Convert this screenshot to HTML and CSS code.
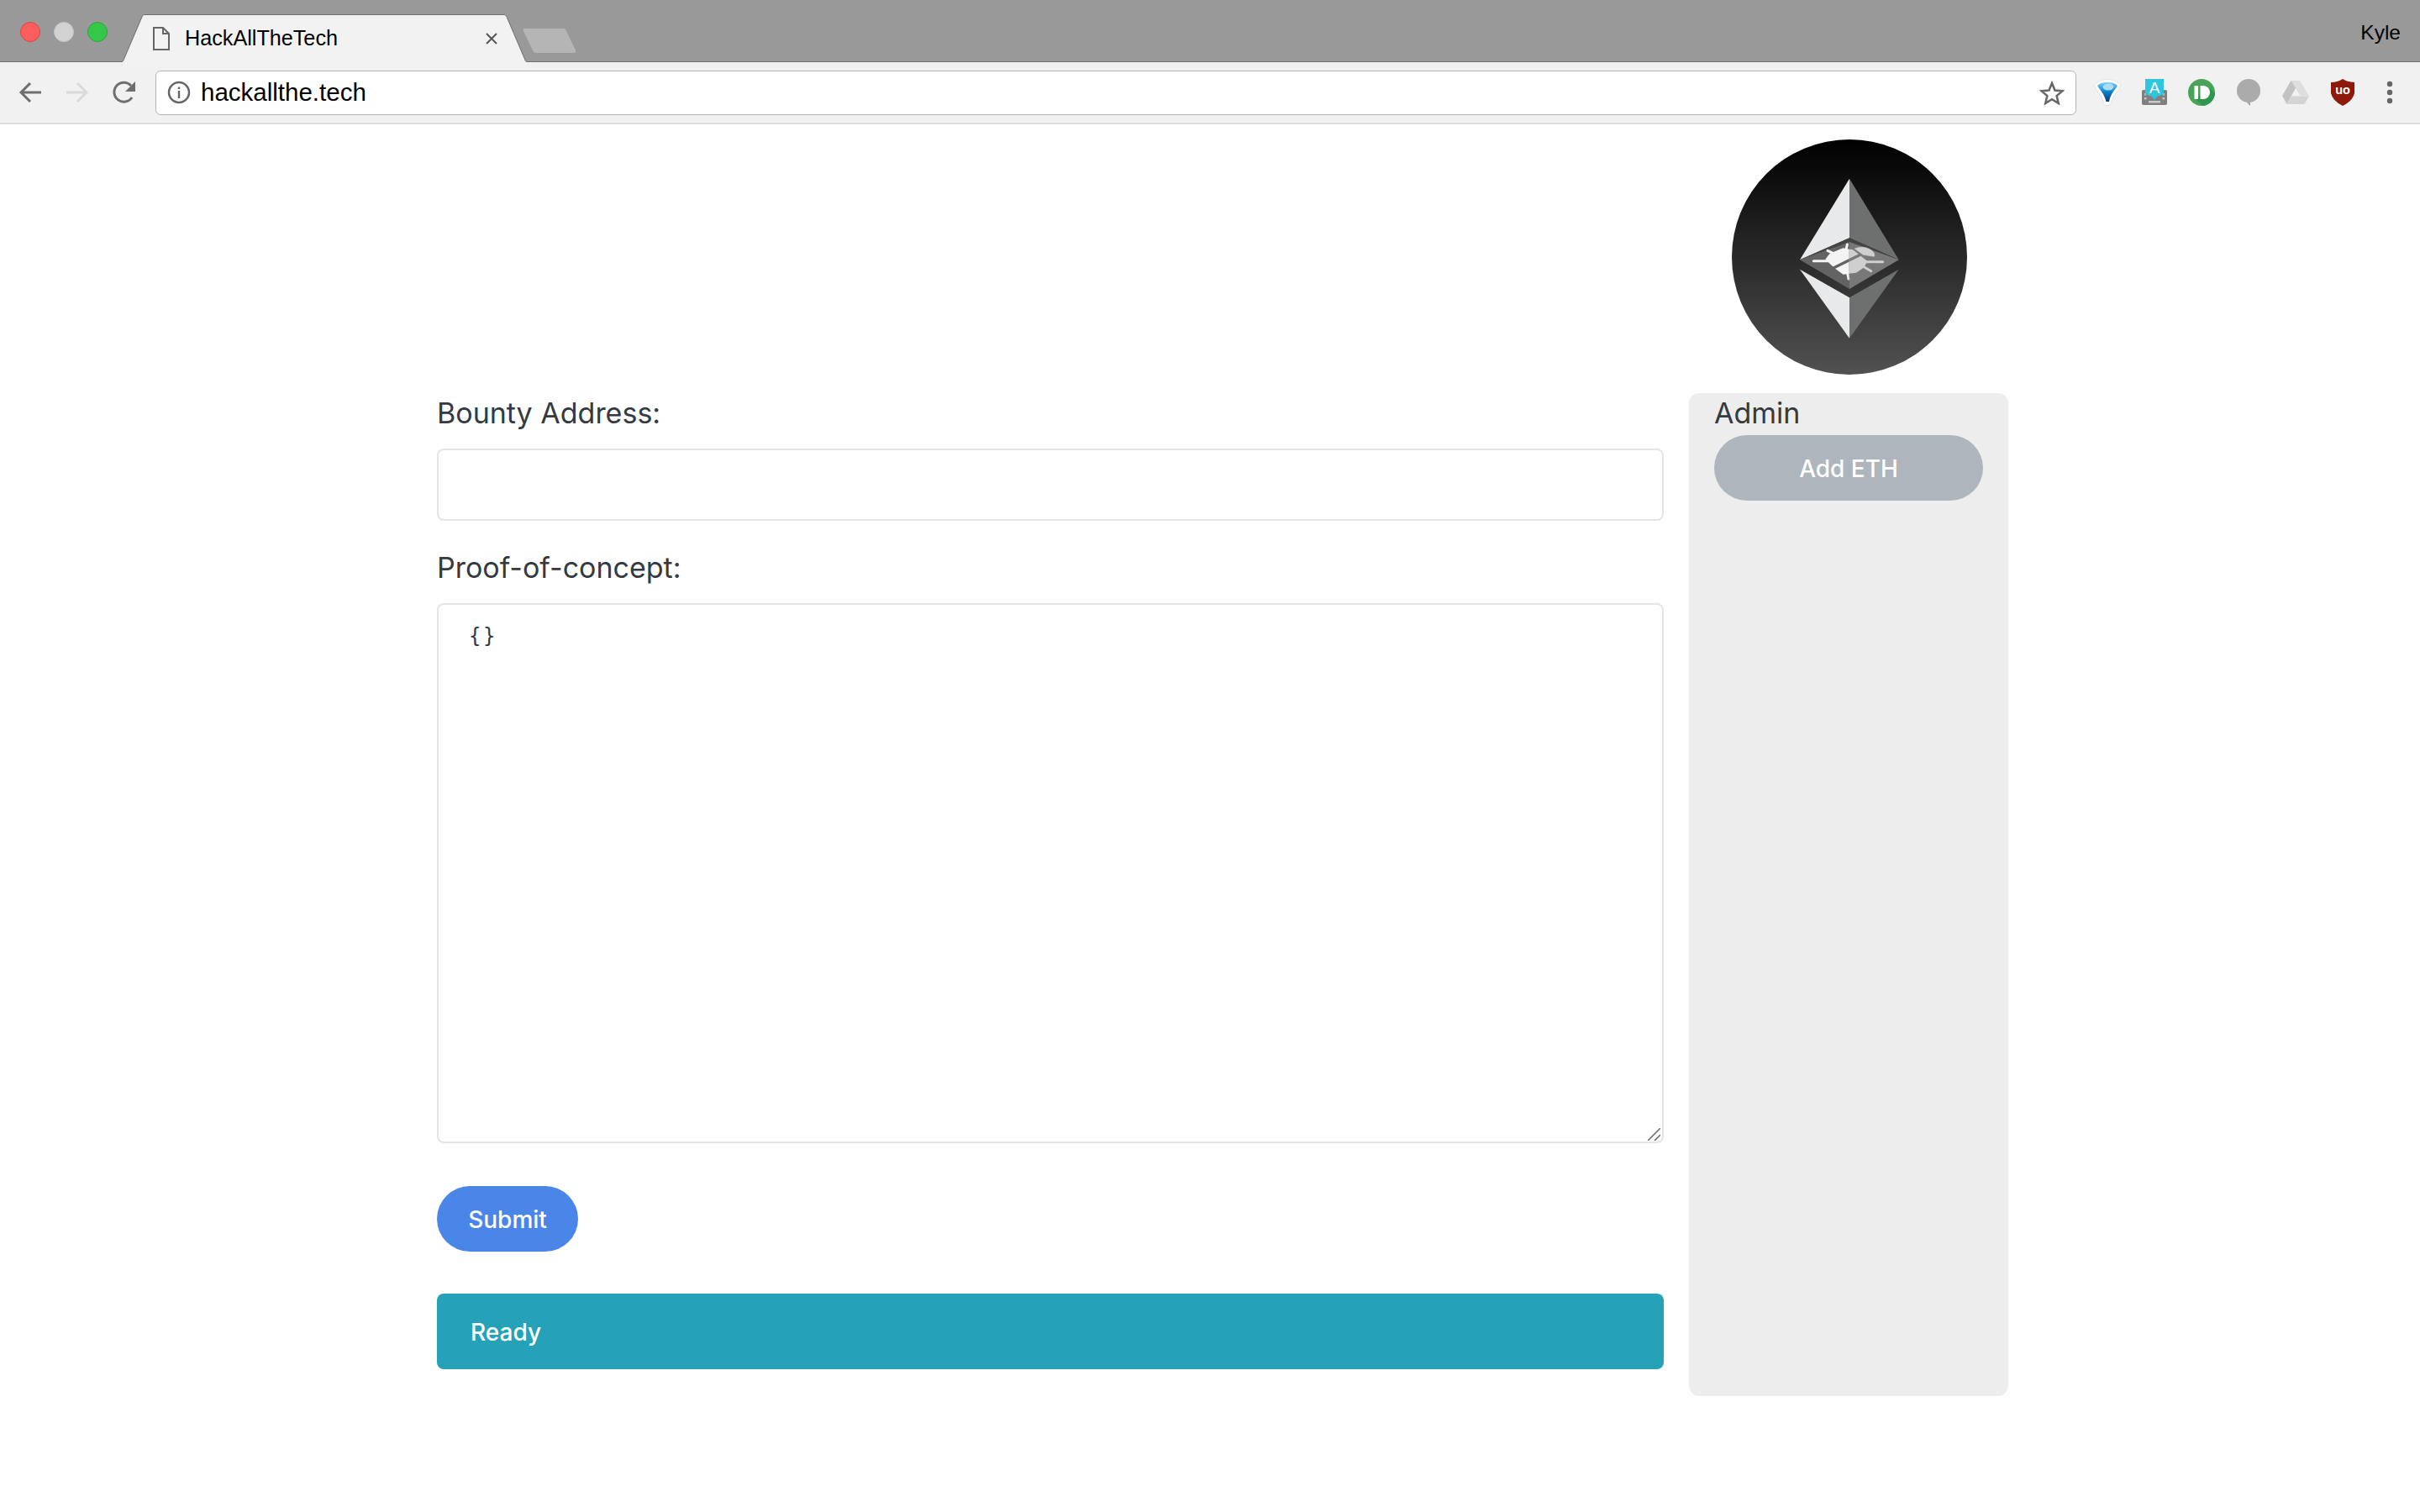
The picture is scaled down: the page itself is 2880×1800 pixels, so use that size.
FILE: index.html
```html
<!DOCTYPE html>
<html lang="en">
<head>
    <meta charset="UTF-8">
    <meta name="viewport" content="width=device-width, initial-scale=1.0">
    <title>HackAllTheTech</title>
    <link rel="stylesheet" href="styles.css">
</head>
<body>
    <!-- Browser chrome -->
    <div class="tab-strip">
        <div class="lights">
            <span class="light light-red"></span>
            <span class="light light-grey"></span>
            <span class="light light-green"></span>
        </div>
        <div class="tab">
            <svg class="tab-shape" width="482" height="57" viewBox="0 0 482 57">
                <path d="M0 56.500 C1 56.500 1.500 56 2 54.500 L24 3 C25 1 25.500 .5 27 .5 L455 .5 C456.500 .5 457 1 458 3 L480 54.500 C480.500 56 481 56.500 482 56.500" fill="#f2f2f2" stroke="#6e6e6e"/>
                <rect x="1" y="56" width="480" height="1" fill="#f2f2f2"/>
            </svg>
            <svg class="tab-icon" width="20" height="28" viewBox="0 0 20 28">
                <path d="M1 1 H12 L19 8 V27 H1 Z M12 1 V8 H19" fill="none" stroke="#666" stroke-width="2"/>
            </svg>
            <span class="tab-title">HackAllTheTech</span>
            <svg class="tab-close" width="16" height="16" viewBox="0 0 16 16">
                <path d="M2 2 L14 14 M14 2 L2 14" stroke="#555" stroke-width="2"/>
            </svg>
        </div>
        <svg class="new-tab" width="64" height="31" viewBox="0 0 64 31">
            <path d="M3 1 H48 Q51 1 52 4 L63 27 Q64 30 61 30 H16 Q13 30 12 27 L1 4 Q0 1 3 1 Z" fill="#b5b5b5"/>
        </svg>
        <span class="profile-name">Kyle</span>
    </div>

    <div class="toolbar">
        <span class="nav-btn">
            <svg width="28" height="26" viewBox="0 0 28 26">
                <path d="M27 13 H3 M14 2 L3 13 L14 24" fill="none" stroke="#6e6e6e" stroke-width="3"/>
            </svg>
        </span>
        <span class="nav-btn">
            <svg width="28" height="26" viewBox="0 0 28 26">
                <path d="M1 13 H25 M14 2 L25 13 L14 24" fill="none" stroke="#d9d9d9" stroke-width="3"/>
            </svg>
        </span>
        <span class="nav-btn">
            <svg width="28" height="28" viewBox="0 0 28 28">
                <path d="M23 20 A11.500 11.500 0 1 1 22 6" fill="none" stroke="#6e6e6e" stroke-width="3"/>
                <path d="M27 1 V13 H15 Z" fill="#6e6e6e"/>
            </svg>
        </span>
        <div class="url-box">
            <svg class="url-info" width="28" height="28" viewBox="0 0 28 28">
                <circle cx="14" cy="14" r="12" fill="none" stroke="#666" stroke-width="2.500"/>
                <rect x="12.800" y="12" width="2.400" height="9" fill="#666"/>
                <rect x="12.800" y="7.500" width="2.400" height="2.600" fill="#666"/>
            </svg>
            <span class="url-text">hackallthe.tech</span>
            <svg class="url-star" width="30" height="29" viewBox="0 0 30 29">
                <path d="M15 3 L18.500 11.500 L27.500 12.200 L20.600 18.100 L22.800 27 L15 22.200 L7.200 27 L9.400 18.100 L2.500 12.200 L11.500 11.500 Z" fill="none" stroke="#666" stroke-width="2.500"/>
            </svg>
        </div>
        <div class="extensions">
            <!-- funnel -->
            <span class="ext-btn">
                <svg width="32" height="32" viewBox="0 0 32 32">
                    <defs>
                        <linearGradient id="funnel-fill" x1="0" y1="0" x2="0" y2="1">
                            <stop offset="0" stop-color="#7fd0f5"/>
                            <stop offset=".5" stop-color="#0a82cc"/>
                            <stop offset="1" stop-color="#063a6e"/>
                        </linearGradient>
                    </defs>
                    <path d="M16 .5 C23 .5 28 3 31.500 8 C29 15 23 20 21 27 Q20 31.500 16 31.500 Q12 31.500 11 27 C9 20 3 15 .5 8 C4 3 9 .5 16 .5 Z" fill="#fff" stroke="#e2e2e2"/>
                    <path d="M16 4 C22 4 26 5.500 28 8 C25 13 19.500 18 18 27 H14.500 C12.500 18 7 13 4 8 C6 5.500 10 4 16 4 Z" fill="url(#funnel-fill)"/>
                    <ellipse cx="17" cy="9.500" rx="6.500" ry="4" fill="#a8def8"/>
                </svg>
            </span>
            <!-- keyboard -->
            <span class="ext-btn">
                <svg width="32" height="32" viewBox="0 0 32 32">
                    <rect x="1" y="13" width="30" height="18" rx="2" fill="#808080"/>
                    <g fill="#c8c8c8">
                        <rect x="4" y="17" width="2.500" height="2.500"/>
                        <rect x="9" y="17" width="2.500" height="2.500"/>
                        <rect x="20.500" y="17" width="2.500" height="2.500"/>
                        <rect x="25.500" y="17" width="2.500" height="2.500"/>
                        <rect x="4" y="22" width="2.500" height="2.500"/>
                        <rect x="25.500" y="22" width="2.500" height="2.500"/>
                        <rect x="9" y="26" width="14" height="2.500"/>
                    </g>
                    <path d="M5 0 H27 V19 H21 L16 25 L11 19 H5 Z" fill="#2fc4e0"/>
                    <text class="ext-letter" x="16" y="17">A</text>
                </svg>
            </span>
            <!-- pushbullet -->
            <span class="ext-btn">
                <svg width="32" height="32" viewBox="0 0 32 32">
                    <circle cx="16" cy="16" r="16" fill="#4aa458"/>
                    <path d="M10 25 L18 32 A16 16 0 0 0 32 17 L21 7 Z" fill="#2f9650"/>
                    <rect x="7.500" y="8" width="4.500" height="16" rx=".8" fill="#fff"/>
                    <path d="M14.500 8 H18 A8 8 0 0 1 18 24 H14.500 Z" fill="#fff"/>
                </svg>
            </span>
            <!-- speech bubble -->
            <span class="ext-btn">
                <svg width="30" height="32" viewBox="0 0 30 32">
                    <circle cx="15" cy="14" r="14" fill="#aaa"/>
                    <path d="M13 26 H17 V32 Q15 31 13 28 Z" fill="#aaa"/>
                </svg>
            </span>
            <!-- drive -->
            <span class="ext-btn">
                <svg width="32" height="28" viewBox="0 0 32 28">
                    <path d="M10.500 0 H21 L11 18 L5.500 28 L0 18 Z" fill="#c2c2c2"/>
                    <path d="M10.500 0 H21 L32 18 H21.500 Z" fill="#dedede"/>
                    <path d="M11 18.500 H32 L26.500 28 H5.500 Z" fill="#d4d4d4"/>
                </svg>
            </span>
            <!-- shield -->
            <span class="ext-btn">
                <svg width="28" height="32" viewBox="0 0 28 32">
                    <path d="M14 0 Q20 4 28 4 V17 Q26 26 14 32 Q2 26 0 17 V4 Q8 4 14 0 Z" fill="#8f1a0c"/>
                    <text class="ext-shield" x="14" y="18">uo</text>
                </svg>
            </span>
            <span class="ext-btn">
                <svg width="8" height="28" viewBox="0 0 8 28">
                    <circle cx="4" cy="4" r="3.200" fill="#666"/>
                    <circle cx="4" cy="14" r="3.200" fill="#666"/>
                    <circle cx="4" cy="24" r="3.200" fill="#666"/>
                </svg>
            </span>
        </div>
    </div>

    <!-- Page -->
    <div class="page">
        <div class="logo-row">
            <svg class="logo" width="280" height="280" viewBox="0 0 280 280">
                <defs>
                    <linearGradient id="logo-bg" x1="0" y1="0" x2="0" y2="1">
                        <stop offset="0" stop-color="#000"/>
                        <stop offset="1" stop-color="#525252"/>
                    </linearGradient>
                    <clipPath id="bug-left"><rect x="0" y="0" width="212" height="240"/></clipPath>
                    <clipPath id="bug-right"><rect x="212" y="0" width="200" height="240"/></clipPath>
                    <g id="bug">
                        <path d="M85 122 H140 M135 85 L160 97 M205 63 L200 88 M210 186 L205 160 M332 125 H270 M290 158 L260 140" fill="none" stroke-width="9" stroke-linecap="round"/>
                        <path d="M132 116 L146 98 L190 80 L224 86 L272 124 L262 142 L236 160 L192 166 L160 143 Z" stroke-width="8" stroke-linejoin="round"/>
                        <path d="M232 78 Q260 66 286 80 Q304 90 302 106 L262 100 Z" stroke-width="2" stroke-linejoin="round"/>
                    </g>
                </defs>
                <circle cx="140" cy="140" r="140" fill="url(#logo-bg)"/>
                <!-- upper half -->
                <path d="M140 46.700 L81 143.300 L140 117.300 Z" fill="#e8e9ea"/>
                <path d="M140 46.700 L198.700 143.300 L140 117.300 Z" fill="#6e706f"/>
                <!-- centre diamond with the bug -->
                <path d="M140 117.300 L81 143.300 L198.700 143.300 Z" fill="#444"/>
                <path d="M140 122 L81 143.300 L140 178 Z" fill="#636363"/>
                <path d="M140 122 L198.700 143.300 L140 178 Z" fill="#787878"/>
                <g transform="translate(69 104) scale(.3333)">
                    <use href="#bug" clip-path="url(#bug-left)" fill="#f4f4f4" stroke="#f4f4f4"/>
                    <use href="#bug" clip-path="url(#bug-right)" fill="#cfcfcf" stroke="#cfcfcf"/>
                    <path d="M150 150 L252 100" clip-path="url(#bug-left)" stroke="#636363" stroke-width="10"/>
                    <path d="M150 150 L252 100" clip-path="url(#bug-right)" stroke="#787878" stroke-width="10"/>
                </g>
                <!-- lower half -->
                <path d="M81 154.700 L140 188.300 V236.700 Z" fill="#e8e9ea"/>
                <path d="M198.700 154.700 L140 188.300 V236.700 Z" fill="#6e706f"/>
            </svg>
        </div>

        <div class="main-row">
            <form class="bounty-form">
                <label class="field-label">Bounty Address:</label>
                <input class="field-input" type="text">

                <label class="field-label second-label">Proof-of-concept:</label>
                <div class="code-wrap">
                    <textarea class="code-input" spellcheck="false">{}</textarea>
                    <svg class="resize-handle" width="15" height="15" viewBox="0 0 15 15">
                        <path d="M0 15 L15 0 M8 15 L15 8" stroke="#666" stroke-width="1.500"/>
                    </svg>
                </div>

                <button class="btn-submit" type="button">Submit</button>
                <div class="status-bar">Ready</div>
            </form>

            <div class="admin-panel">
                <div class="field-label">Admin</div>
                <button class="btn-add" type="button">Add ETH</button>
            </div>
        </div>
    </div>
</body>
</html>
```

FILE: styles.css
```css
/* Base */
* {
    box-sizing: border-box;
}

body {
    margin: 0;
    background-color: #fff;
    color: #343a40;
    font-family: Inter, "Liberation Sans", sans-serif;
}

/* Tab strip */
.tab-strip {
    display: flex;
    height: 74px;
    background-color: #999;
    border-bottom: 1px solid #6e6e6e;
    font-family: "Liberation Sans", Arial, sans-serif;
}

.lights {
    display: flex;
    gap: 16px;
    margin: 26px 17px 0 24px;
}

.light {
    width: 24px;
    height: 24px;
    border-radius: 50%;
}

.light-red {
    background-color: #fc5f5b;
    border: 1px solid #e2463f;
}

.light-grey {
    background-color: #d2d2d2;
    border: 1px solid #c4c4c4;
}

.light-green {
    background-color: #34c84a;
    border: 1px solid #2aa63a;
}

.tab {
    position: relative;
    display: flex;
    align-items: center;
    width: 482px;
    height: 57px;
    margin-top: 17px;
    padding: 0 34px 0 37px;
    color: #000;
}

.tab-shape {
    position: absolute;
    left: 0;
    top: 0;
}

.tab-icon,
.tab-title,
.tab-close {
    position: relative;
}

.tab-title {
    margin-left: 18px;
    font-size: 25.200px;
}

.tab-close {
    margin-left: auto;
}

.new-tab {
    margin: 33px 0 0 -5px;
}

.profile-name {
    margin: 25px 23px 0 auto;
    font-size: 24.500px;
    line-height: 28px;
    color: #000;
}

/* Toolbar */
.toolbar {
    display: flex;
    align-items: center;
    height: 74px;
    padding: 0 8px;
    background-color: #f1f1f1;
    border-bottom: 2px solid #ddd;
    font-family: "Liberation Sans", Arial, sans-serif;
}

.nav-btn,
.ext-btn {
    display: flex;
    align-items: center;
    justify-content: center;
    width: 56px;
}

.url-box {
    display: flex;
    align-items: center;
    flex: 1;
    height: 53px;
    margin: 0 9px;
    padding: 0 13px;
    background-color: #fff;
    border: 1px solid #b4b4b4;
    border-radius: 6px;
}

.url-text {
    margin-left: 12px;
    font-size: 29.500px;
    color: #000;
}

.url-star {
    margin-left: auto;
}

.extensions {
    display: flex;
}

.ext-letter {
    font-family: "Liberation Sans", Arial, sans-serif;
    font-size: 19px;
    fill: #fff;
    text-anchor: middle;
}

.ext-shield {
    font-family: "Liberation Sans", Arial, sans-serif;
    font-size: 14.500px;
    font-weight: bold;
    fill: #fff;
    text-anchor: middle;
}

/* Page */
.page {
    padding: 18px 0 0 520px;
}

.logo-row {
    display: flex;
    justify-content: flex-end;
    width: 1870px;
    padding-right: 49px;
}

.logo {
    display: block;
}

.main-row {
    display: flex;
    gap: 30px;
    margin-top: 22px;
}

.bounty-form {
    display: flex;
    flex-direction: column;
    width: 1460px;
}

.field-label {
    display: block;
    font-size: 34px;
    line-height: 48px;
}

.second-label {
    margin-top: 32px;
}

.field-input {
    display: block;
    width: 100%;
    height: 86px;
    margin-top: 18px;
    border: 2px solid #e5e5e5;
    border-radius: 8px;
    outline: none;
}

.code-wrap {
    position: relative;
    height: 643px;
    margin-top: 18px;
}

.code-input {
    display: block;
    width: 100%;
    height: 100%;
    padding: 19px 36px;
    border: 2px solid #e5e5e5;
    border-radius: 8px;
    outline: none;
    resize: none;
    font-family: "DejaVu Sans Mono", monospace;
    font-size: 24px;
    letter-spacing: 2.500px;
    line-height: 36px;
    color: #2e3a4a;
}

.resize-handle {
    position: absolute;
    right: 4px;
    bottom: 3px;
}

.btn-submit {
    align-self: flex-start;
    width: 168px;
    height: 78px;
    margin-top: 51px;
    padding: 1px 0 0;
    background-color: #4a86e8;
    border: none;
    border-radius: 39px;
    font-family: inherit;
    font-size: 28px;
    font-weight: 500;
    color: #fff;
}

.status-bar {
    height: 90px;
    margin-top: 50px;
    padding-left: 40px;
    background-color: #26a2b8;
    border-radius: 8px;
    font-size: 28px;
    font-weight: 500;
    line-height: 92px;
    color: #fff;
}

/* Admin panel */
.admin-panel {
    width: 380px;
    height: 1194px;
    padding: 0 30px;
    background-color: #ededed;
    border-radius: 12px;
}

.btn-add {
    display: block;
    width: 100%;
    height: 78px;
    margin-top: 2px;
    padding: 1px 0 0;
    background-color: #aeb5bc;
    border: none;
    border-radius: 39px;
    font-family: inherit;
    font-size: 28px;
    font-weight: 500;
    color: #fff;
}
```
